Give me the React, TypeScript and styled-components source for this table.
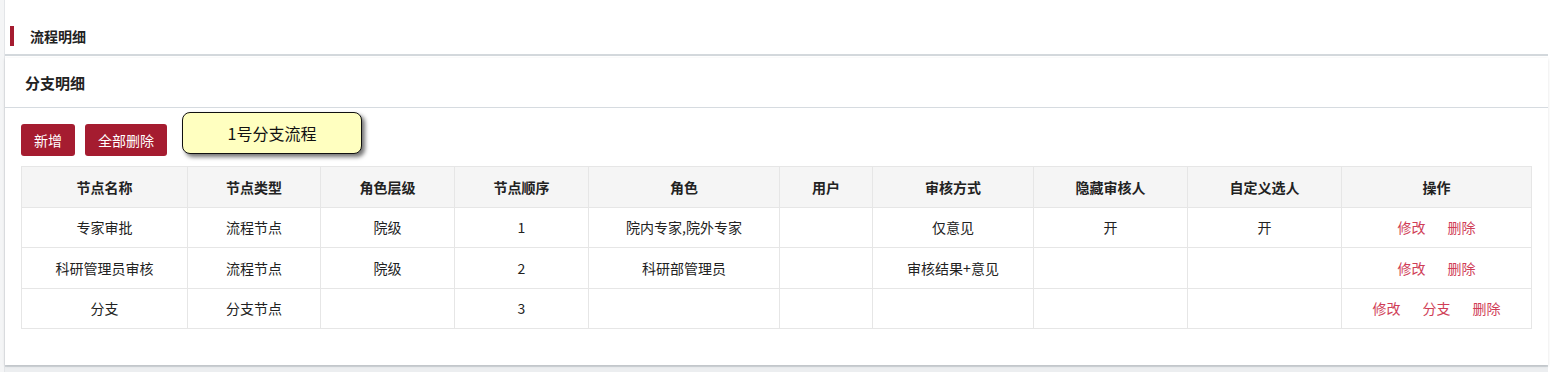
import React from 'react';
import styled, { createGlobalStyle } from 'styled-components';

const GlobalStyle = createGlobalStyle`
  html, body {
    margin: 0;
    padding: 0;
    background: #ffffff;
  }
  body {
    font-family: "Noto Sans CJK SC", "Noto Sans", sans-serif;
    color: #333;
  }
`;

// left grey strip + white work area
const Page = styled.div`
  min-height: 372px;
  padding: 0 2px 0 5px;
  background: #fff;
  box-shadow: inset 4px 0 0 #f4f5f6, inset 5px 0 0 #e3e5e8;
  display: flex;
  flex-direction: column;
`;

const SectionTitle = styled.div`
  height: 56px;
  display: flex;
  align-items: flex-end;
  padding: 0 0 8px 5px;
  box-sizing: border-box;
  border-bottom: 2px solid #d3d8dc;
`;

const RedBar = styled.span`
  width: 4px;
  height: 20px;
  background: #a51c30;
  margin-right: 16px;
`;

const TitleText = styled.h2`
  margin: 0;
  font-size: 14px;
  font-weight: 700;
  color: #222;
  line-height: 20px;
`;

const Card = styled.section`
  position: relative;
  margin-top: 2px;
  background: #fff;
  box-shadow: 0 1px 3px rgba(0, 0, 0, 0.12);
`;

const CardHeader = styled.div`
  height: 49px;
  display: flex;
  align-items: center;
  padding-left: 20px;
  border-bottom: 1px solid #d6dbe0;
  font-size: 15px;
  font-weight: 700;
  color: #222;
`;

const CardBody = styled.div`
  padding: 16px 16px 36px;
`;

const Toolbar = styled.div`
  display: flex;
  gap: 10px;
  margin-bottom: 10px;
`;

const Button = styled.button`
  height: 32px;
  padding: 0 13px;
  border: none;
  border-radius: 3px;
  background: #a51c30;
  color: #fff;
  font-family: inherit;
  font-size: 14px;
  cursor: pointer;
`;

const Tip = styled.div`
  position: absolute;
  left: 177px;
  top: 54px;
  width: 178px;
  height: 40px;
  display: flex;
  align-items: center;
  justify-content: center;
  background: #ffffc0;
  border: 1px solid #111;
  border-radius: 8px;
  box-shadow: 3px 3px 4px rgba(0, 0, 0, 0.55);
  font-size: 16px;
  color: #111;
`;

const Table = styled.table`
  width: 1510px;
  border-collapse: collapse;
  table-layout: fixed;
  font-size: 14px;
`;

const Th = styled.th`
  height: 39.5px;
  padding: 0;
  background: #f5f5f5;
  border: 1px solid #e6e6e6;
  font-weight: 700;
  color: #222;
  text-align: center;
`;

const Td = styled.td`
  height: 39.5px;
  padding: 0;
  border: 1px solid #e6e6e6;
  color: #222;
  text-align: center;
`;

const Link = styled.a`
  color: #d03e57;
  margin: 0 11px;
  cursor: pointer;
`;

const Footer = styled.div`
  flex: 1;
  border-top: 2px solid #d3d8dc;
  background: #eceef0;
`;

const columns = [
  { title: '节点名称', width: 166 },
  { title: '节点类型', width: 133 },
  { title: '角色层级', width: 134 },
  { title: '节点顺序', width: 134 },
  { title: '角色', width: 191 },
  { title: '用户', width: 93 },
  { title: '审核方式', width: 161 },
  { title: '隐藏审核人', width: 154 },
  { title: '自定义选人', width: 154 },
  { title: '操作', width: 190 },
];

const rows = [
  { name: '专家审批', type: '流程节点', level: '院级', order: 1, role: '院内专家,院外专家', user: '', mode: '仅意见', hide: '开', custom: '开', actions: ['修改', '删除'] },
  { name: '科研管理员审核', type: '流程节点', level: '院级', order: 2, role: '科研部管理员', user: '', mode: '审核结果+意见', hide: '', custom: '', actions: ['修改', '删除'] },
  { name: '分支', type: '分支节点', level: '', order: 3, role: '', user: '', mode: '', hide: '', custom: '', actions: ['修改', '分支', '删除'] },
];

export default function App() {
  return (
    <>
      <GlobalStyle />
      <Page>
        <SectionTitle>
          <RedBar />
          <TitleText>流程明细</TitleText>
        </SectionTitle>
        <Card>
          <CardHeader>分支明细</CardHeader>
          <CardBody>
            <Toolbar>
              <Button>新增</Button>
              <Button>全部删除</Button>
            </Toolbar>
            <Table>
              <colgroup>
                {columns.map((c) => (
                  <col key={c.title} style={{ width: c.width }} />
                ))}
              </colgroup>
              <thead>
                <tr>
                  {columns.map((c) => (
                    <Th key={c.title}>{c.title}</Th>
                  ))}
                </tr>
              </thead>
              <tbody>
                {rows.map((r) => (
                  <tr key={r.order}>
                    <Td>{r.name}</Td>
                    <Td>{r.type}</Td>
                    <Td>{r.level}</Td>
                    <Td>{r.order}</Td>
                    <Td>{r.role}</Td>
                    <Td>{r.user}</Td>
                    <Td>{r.mode}</Td>
                    <Td>{r.hide}</Td>
                    <Td>{r.custom}</Td>
                    <Td>
                      {r.actions.map((a) => (
                        <Link key={a}>{a}</Link>
                      ))}
                    </Td>
                  </tr>
                ))}
              </tbody>
            </Table>
          </CardBody>
          <Tip>1号分支流程</Tip>
        </Card>
        <Footer />
      </Page>
    </>
  );
}
